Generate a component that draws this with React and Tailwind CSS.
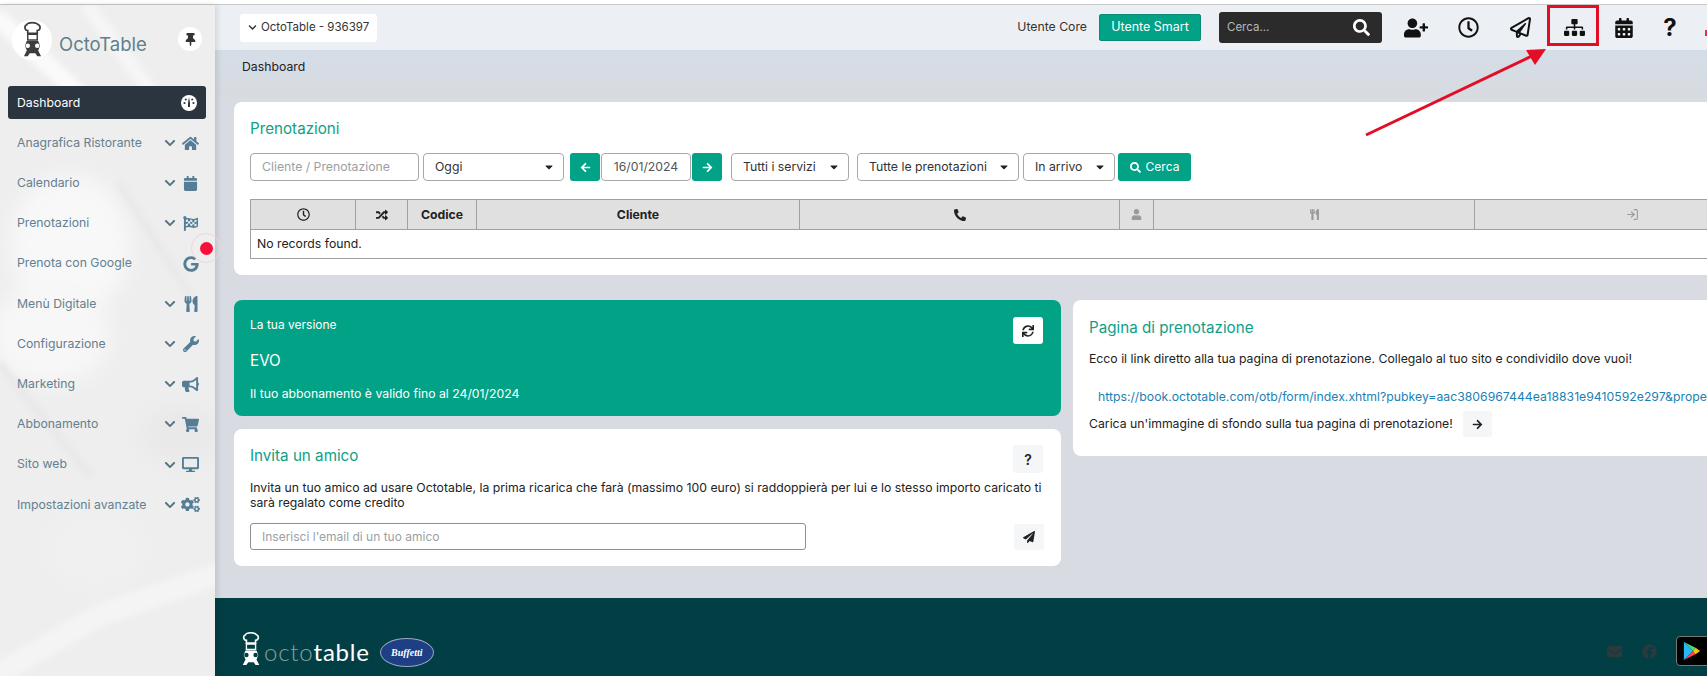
import React from "react";
import { FaUserPlus, FaRegClock, FaRegPaperPlane, FaSitemap, FaCalendarAlt, FaSearch, FaHome, FaCalendar, FaFlagCheckered, FaGoogle, FaUtensils, FaWrench, FaBullhorn, FaShoppingCart, FaDesktop, FaCogs, FaChevronDown, FaThumbtack, FaRandom, FaPhone, FaUser, FaSync, FaPaperPlane, FaCaretDown, FaArrowLeft, FaArrowRight, FaEnvelope, FaFacebook } from "react-icons/fa";
import { LogIn } from "lucide-react";

const menu = [
  ["Anagrafica Ristorante", FaHome, true, 17],
  ["Calendario", FaCalendar, true, 15],
  ["Prenotazioni", FaFlagCheckered, true, 15],
  ["Prenota con Google", FaGoogle, false, 16],
  ["Menù Digitale", FaUtensils, true, 16],
  ["Configurazione", FaWrench, true, 16],
  ["Marketing", FaBullhorn, true, 17],
  ["Abbonamento", FaShoppingCart, true, 17],
  ["Sito web", FaDesktop, true, 17],
  ["Impostazioni avanzate", FaCogs, true, 19],
];

function Chef({ className, hat = "#3d3d3d", body = "#3d3d3d", eye = "#fff" }) {
  return (
    <svg viewBox="0 0 24 40" className={className}>
      <path d="M7 10c-3.500 0-4-5-1-6 1-3 10-3 12 0 3 1 2.500 6-1 6v3H7z" fill="none" stroke={hat} strokeWidth="1.800" />
      <path d="M7 14h10v6H7z" fill="none" stroke={hat} strokeWidth="1.500" />
      <path d="M6 21h12l2 5-2 5 3 6h-4l-2-3h-6l-2 3H3l3-6-2-5z" fill={body} />
      <circle cx="7" cy="26" r="2.400" fill={eye} />
      <circle cx="17" cy="26" r="2.400" fill={eye} />
    </svg>
  );
}

function Select({ label, className }) {
  return (
    <div className={`flex h-[28px] shrink-0 items-center justify-between rounded-[4px] border border-[#a8a8a8] bg-white pl-[11px] pr-[8px] text-[12.250px] text-[#333] ${className}`}>
      <span>{label}</span>
      <FaCaretDown className="text-[12px] text-[#222]" />
    </div>
  );
}

function Sidebar() {
  return (
    <aside className="relative z-10 h-full w-[215px] shrink-0 overflow-hidden bg-[#eeeeef] shadow-[2px_0_6px_rgba(0,0,0,0.12)]">
      <svg className="absolute inset-0 h-full w-full" viewBox="0 0 215 671" preserveAspectRatio="none">
        <defs>
          <filter id="blurA"><feGaussianBlur stdDeviation="10" /></filter>
          <filter id="blurB"><feGaussianBlur stdDeviation="3" /></filter>
        </defs>
        <g filter="url(#blurA)">
          <ellipse cx="70" cy="240" rx="60" ry="70" fill="#f8f8f8" />
          <ellipse cx="50" cy="330" rx="60" ry="50" fill="#f7f7f7" />
          <ellipse cx="180" cy="430" rx="40" ry="30" fill="#e9e9ea" />
          <ellipse cx="95" cy="545" rx="50" ry="40" fill="#f0f0f1" />
        </g>
        <g filter="url(#blurB)" fill="none" strokeLinecap="round">
          <path d="M0 15L80 90" stroke="#fafafa" strokeWidth="18" />
          <path d="M90 5L150 85" stroke="#f6f6f6" strokeWidth="14" />
          <path d="M0 360L90 470" stroke="#e8e8e9" strokeWidth="8" />
          <path d="M120 180L190 290" stroke="#e8e8e9" strokeWidth="7" />
          <path d="M0 668L100 610L215 570" stroke="#f4f4f5" strokeWidth="22" />
        </g>
      </svg>
      <div className="relative">
        <div className="relative h-[77px]">
          <div className="absolute left-[12px] top-[15px] flex h-[40px] w-[40px] items-center justify-center rounded-full bg-white">
            <Chef className="h-[38px] w-[23px]" />
          </div>
          <div className="absolute left-[59px] top-[24px] text-[18.500px] leading-[30px] text-[#5f7f8c]">OctoTable</div>
          <div className="absolute left-[178px] top-[22px] flex h-[24px] w-[24px] items-center justify-center rounded-full bg-white text-[13px] text-[#333]">
            <FaThumbtack />
          </div>
        </div>
        <div className="mx-[8px] mt-[4px] flex h-[33px] w-[198px] items-center justify-between rounded-[3px] bg-[#2b3540] pl-[9px] pr-[9px] pt-[1px] text-[12.250px] text-white">
          <span>Dashboard</span>
          <svg viewBox="0 0 16 16" className="h-[16px] w-[16px]">
            <circle cx="8" cy="8" r="8" fill="#fff" />
            <path d="M7 8l1-6 1 6v4H7z" fill="#2b3540" />
            <circle cx="3.500" cy="8" r="1.100" fill="#2b3540" />
            <circle cx="12.500" cy="8" r="1.100" fill="#2b3540" />
            <circle cx="4.800" cy="4.500" r="1" fill="#2b3540" />
            <circle cx="11.200" cy="4.500" r="1" fill="#2b3540" />
          </svg>
        </div>
        <nav className="mt-[4px]">
          {menu.map(([label, Icon, chevron, size]) => (
            <div key={label} className="flex h-[40.200px] items-center pl-[17px] text-[12.250px] text-[#64808e]">
              <span className="flex-1 truncate">{label}</span>
              {chevron && <FaChevronDown className="text-[12px] text-[#557482]" />}
              <span className="ml-[5px] mr-[15px] flex w-[19px] items-center justify-center text-[#557e96]">
                <Icon style={{ fontSize: size }} />
              </span>
            </div>
          ))}
        </nav>
      </div>
    </aside>
  );
}

function Topbar() {
  const icons = [
    [FaUserPlus, 24, "w-[53px]"],
    [FaRegClock, 21, "w-[52px]"],
    [FaRegPaperPlane, 21, "w-[53px]"],
    [FaSitemap, 21, "w-[54px]"],
    [FaCalendarAlt, 20, "w-[46px]"],
  ];
  return (
    <header className="h-[45px] w-[1492px] shrink-0 bg-[#eceff4] shadow-[0_1px_2px_rgba(0,0,0,0.12)]">
      <div className="flex h-full items-center pl-[25px]">
        <div className="flex h-[28px] w-[137px] items-center gap-[4px] rounded-[3px] bg-white pl-[8px] text-[11.500px] text-[#333]">
          <FaChevronDown className="text-[9px]" />
          <span>OctoTable - 936397</span>
        </div>
        <div className="flex-1" />
        <span className="text-[12.250px] text-[#333]">Utente Core</span>
        <div className="ml-[12px] flex h-[27px] w-[102px] items-center justify-center rounded-[2px] border border-[#0b8a75] bg-[#02a287] text-[12.500px] text-white">Utente Smart</div>
        <div className="ml-[18px] flex h-[31px] w-[163px] items-center justify-between rounded-[3px] bg-[#2b2b2b] pl-[8px] pr-[12px] text-[11.500px] text-[#b8b8b8]">
          <span>Cerca...</span>
          <FaSearch className="text-[17px] text-white" />
        </div>
        <div className="ml-[7px] flex items-center">
          {icons.map(([Icon, size, w], i) => (
            <span key={i} className={`flex items-center justify-center text-[#111] ${w}`}>
              <Icon style={{ fontSize: size }} />
            </span>
          ))}
          <span className="w-[46px] text-center text-[24px] font-bold leading-[30px] text-[#111]">?</span>
          <span className="h-[6px] w-[14px] bg-transparent" />
        </div>
      </div>
    </header>
  );
}

function PrenotazioniCard() {
  return (
    <section className="w-[1600px] rounded-[8px] bg-white pl-[16px] pt-[15px] pb-[16px]">
      <h2 className="text-[15.200px] leading-[24px] text-[#0fa088]">Prenotazioni</h2>
      <div className="mt-[12px] flex items-center">
        <div className="flex h-[28px] w-[169px] items-center rounded-[4px] border border-[#a8a8a8] pl-[11px] text-[12.250px] text-[#9a9fa5]">Cliente / Prenotazione</div>
        <Select label="Oggi" className="ml-[4px] w-[141px]" />
        <button className="ml-[6px] flex h-[28px] w-[30px] items-center justify-center rounded-[3px] bg-[#02a287] text-[11px] text-white"><FaArrowLeft /></button>
        <div className="ml-[1px] flex h-[28px] w-[90px] items-center justify-center rounded-[4px] border border-[#a8a8a8] text-[12.250px] text-[#555]">16/01/2024</div>
        <button className="ml-[1px] flex h-[28px] w-[30px] items-center justify-center rounded-[3px] bg-[#02a287] text-[11px] text-white"><FaArrowRight /></button>
        <Select label="Tutti i servizi" className="ml-[9px] w-[118px]" />
        <Select label="Tutte le prenotazioni" className="ml-[8px] w-[162px]" />
        <Select label="In arrivo" className="ml-[4px] w-[92px]" />
        <button className="ml-[3px] flex h-[28px] w-[73px] items-center justify-center gap-[5px] rounded-[3px] bg-[#02a287] text-[12px] text-white"><FaSearch className="text-[11px]" />Cerca</button>
      </div>
      <table className="mt-[18px] w-[1540px] table-fixed border-collapse text-[12.250px] text-[#222]">
        <colgroup>
          <col className="w-[105px]" />
          <col className="w-[52px]" />
          <col className="w-[69px]" />
          <col className="w-[323px]" />
          <col className="w-[320px]" />
          <col className="w-[34px]" />
          <col className="w-[321px]" />
          <col className="w-[316px]" />
        </colgroup>
        <thead>
          <tr className="h-[30px] bg-[#e0e0e0]">
            <th className="border border-[#a0a0a0]"><FaRegClock className="mx-auto text-[13px]" /></th>
            <th className="border border-[#a0a0a0]"><FaRandom className="mx-auto text-[12px]" /></th>
            <th className="border border-[#a0a0a0] pt-[1px] font-bold">Codice</th>
            <th className="border border-[#a0a0a0] pt-[1px] font-bold">Cliente</th>
            <th className="border border-[#a0a0a0]"><FaPhone className="mx-auto -scale-x-100 text-[12px]" /></th>
            <th className="border border-[#a0a0a0]"><FaUser className="mx-auto text-[11px] text-[#9a9a9a]" /></th>
            <th className="border border-[#a0a0a0]"><FaUtensils className="mx-auto text-[11px] text-[#9a9a9a]" /></th>
            <th className="border border-[#a0a0a0]"><LogIn className="mx-auto h-[13px] w-[13px] text-[#9a9a9a]" /></th>
          </tr>
        </thead>
        <tbody>
          <tr className="h-[29px]">
            <td colSpan={8} className="border border-[#a0a0a0] pl-[6px] pt-[1px]">No records found.</td>
          </tr>
        </tbody>
      </table>
    </section>
  );
}

function LeftColumn() {
  return (
    <div className="flex w-[827px] shrink-0 flex-col gap-[13px]">
      <section className="relative h-[116px] rounded-[8px] bg-[#02a287] pl-[16px] text-white">
        <div className="pt-[16px] text-[12px] leading-[18px]">La tua versione</div>
        <div className="mt-[15px] text-[15.200px] leading-[24px]">EVO</div>
        <div className="mt-[12px] text-[12.250px] leading-[18px]">Il tuo abbonamento è valido fino al 24/01/2024</div>
        <button className="absolute right-[18px] top-[17px] flex h-[27px] w-[30px] items-center justify-center rounded-[3px] bg-white text-[12px] text-[#222]"><FaSync /></button>
      </section>
      <section className="relative h-[137px] rounded-[8px] bg-white pl-[16px] pr-[17px] pt-[15px]">
        <h2 className="text-[15.200px] leading-[24px] text-[#0fa088]">Invita un amico</h2>
        <p className="mt-[12px] text-[12.250px] leading-[15px] text-[#222]">Invita un tuo amico ad usare Octotable, la prima ricarica che farà (massimo 100 euro) si raddoppierà per lui e lo stesso importo caricato ti sarà regalato come credito</p>
        <div className="mt-[13px] flex items-center justify-between">
          <div className="flex h-[27px] w-[556px] items-center rounded-[3px] border border-[#8f8f8f] pl-[11px] text-[12px] text-[#9a9fa5]">Inserisci l'email di un tuo amico</div>
          <button className="flex h-[26px] w-[30px] items-center justify-center rounded-[3px] bg-[#f5f6f8] text-[12px] text-[#222]"><FaPaperPlane /></button>
        </div>
        <button className="absolute right-[18px] top-[16px] flex h-[28px] w-[30px] items-center justify-center rounded-[3px] bg-[#f5f6f8] text-[14px] font-semibold text-[#222]">?</button>
      </section>
    </div>
  );
}

function BookingCard() {
  return (
    <section className="ml-[12px] h-[156px] w-[700px] shrink-0 overflow-hidden rounded-[8px] bg-white pl-[16px] pt-[16px]">
      <h2 className="text-[15.200px] leading-[24px] text-[#0fa088]">Pagina di prenotazione</h2>
      <p className="mt-[10px] text-[12.250px] leading-[18px] text-[#222]">Ecco il link diretto alla tua pagina di prenotazione. Collegalo al tuo sito e condividilo dove vuoi!</p>
      <a className="ml-[9px] mt-[20px] block whitespace-nowrap text-[12.250px] leading-[18px] text-[#1b7fb5]">https://book.octotable.com/otb/form/index.xhtml?pubkey=aac3806967444ea18831e9410592e297&prope</a>
      <div className="mt-[5px] flex items-center">
        <span className="text-[12.250px] text-[#222]">Carica un'immagine di sfondo sulla tua pagina di prenotazione!</span>
        <button className="ml-[10px] flex h-[26px] w-[29px] items-center justify-center rounded-[3px] bg-[#f5f6f8] text-[11px] text-[#222]"><FaArrowRight /></button>
      </div>
    </section>
  );
}

function Footer() {
  return (
    <footer className="relative flex flex-1 items-end bg-[#023f45] pb-[8px] pl-[25px]">
      <Chef className="h-[37px] w-[22px]" hat="#ffffff" body="#ffffff" eye="#023f45" />
      <div className="ml-[2px] flex items-baseline font-['Lato',sans-serif] text-[24px] leading-[32px] tracking-[0.800px]">
        <span className="font-light text-[#8a9ea0]">octo</span>
        <span className="text-white">table</span>
      </div>
      <div className="mb-[1px] ml-[10px] flex h-[29px] w-[54px] items-center justify-center rounded-[50%] border border-[#9aa7c4] bg-[#1e3f84] font-['Liberation_Serif',serif] text-[10px] font-bold italic text-white">Buffetti</div>
      <div className="absolute left-[1392px] top-[38px] flex items-center">
        <FaEnvelope className="text-[15px] text-[#2c3a3c]" />
        <FaFacebook className="ml-[20px] text-[15px] text-[#2c3a3c]" />
        <div className="ml-[19px] flex h-[30px] w-[40px] items-center rounded-[4px] border border-[#777] bg-black pl-[6px]">
          <svg viewBox="0 0 20 22" className="h-[20px] w-[18px]">
            <path d="M1 1l10 10L1 21z" fill="#29b6f6" />
            <path d="M1 1l13 6.500-3 3.500z" fill="#3ddc84" />
            <path d="M1 21l13-6.500-3-3.500z" fill="#f44" />
            <path d="M14 7.500l5 3.500-5 3.500-3-3.500z" fill="#ffc107" />
          </svg>
        </div>
      </div>
    </footer>
  );
}

export default function App() {
  return (
    <div className="relative h-[676px] w-[1707px] overflow-hidden bg-white font-['Inter',sans-serif]">
      <div className="h-[4px] bg-white" />
      <div className="h-[1px] bg-[#c8c8c8]" />
      <div className="flex h-[671px]">
        <Sidebar />
        <main className="flex min-w-0 flex-1 flex-col overflow-hidden bg-[#d8dbe2]">
          <Topbar />
          <div className="h-[50px] shrink-0 bg-gradient-to-b from-[#d4dde7] to-[#d8dbe0] pl-[27px] pt-[8px] text-[12.250px] leading-[18px] text-[#222]">Dashboard</div>
          <div className="shrink-0 pl-[19px] pt-[2px]">
            <PrenotazioniCard />
            <div className="mt-[25px] flex items-start">
              <LeftColumn />
              <BookingCard />
            </div>
          </div>
          <div className="h-[32px] shrink-0" />
          <Footer />
        </main>
      </div>

      <div className="absolute left-[191px] top-[233px] z-20 flex h-[30px] w-[30px] items-center justify-center rounded-full border border-[#f0d4d8]">
        <span className="h-[13px] w-[13px] rounded-full bg-[#f5103c]" />
      </div>
      <div className="absolute left-[1705px] top-[30px] z-20 h-[6px] w-[2px] bg-[#e8322f]" />
      <div className="absolute left-[1547px] top-[5px] z-20 h-[41px] w-[52px] border-[3px] border-[#e30d26]" />
      <svg className="absolute left-[1360px] top-[45px] z-20 h-[95px] w-[190px]" viewBox="0 0 190 95">
        <path d="M6 90L174 10" stroke="#e30d26" strokeWidth="3" />
        <path d="M186 4L166 5L175 20z" fill="#e30d26" />
      </svg>
    </div>
  );
}
